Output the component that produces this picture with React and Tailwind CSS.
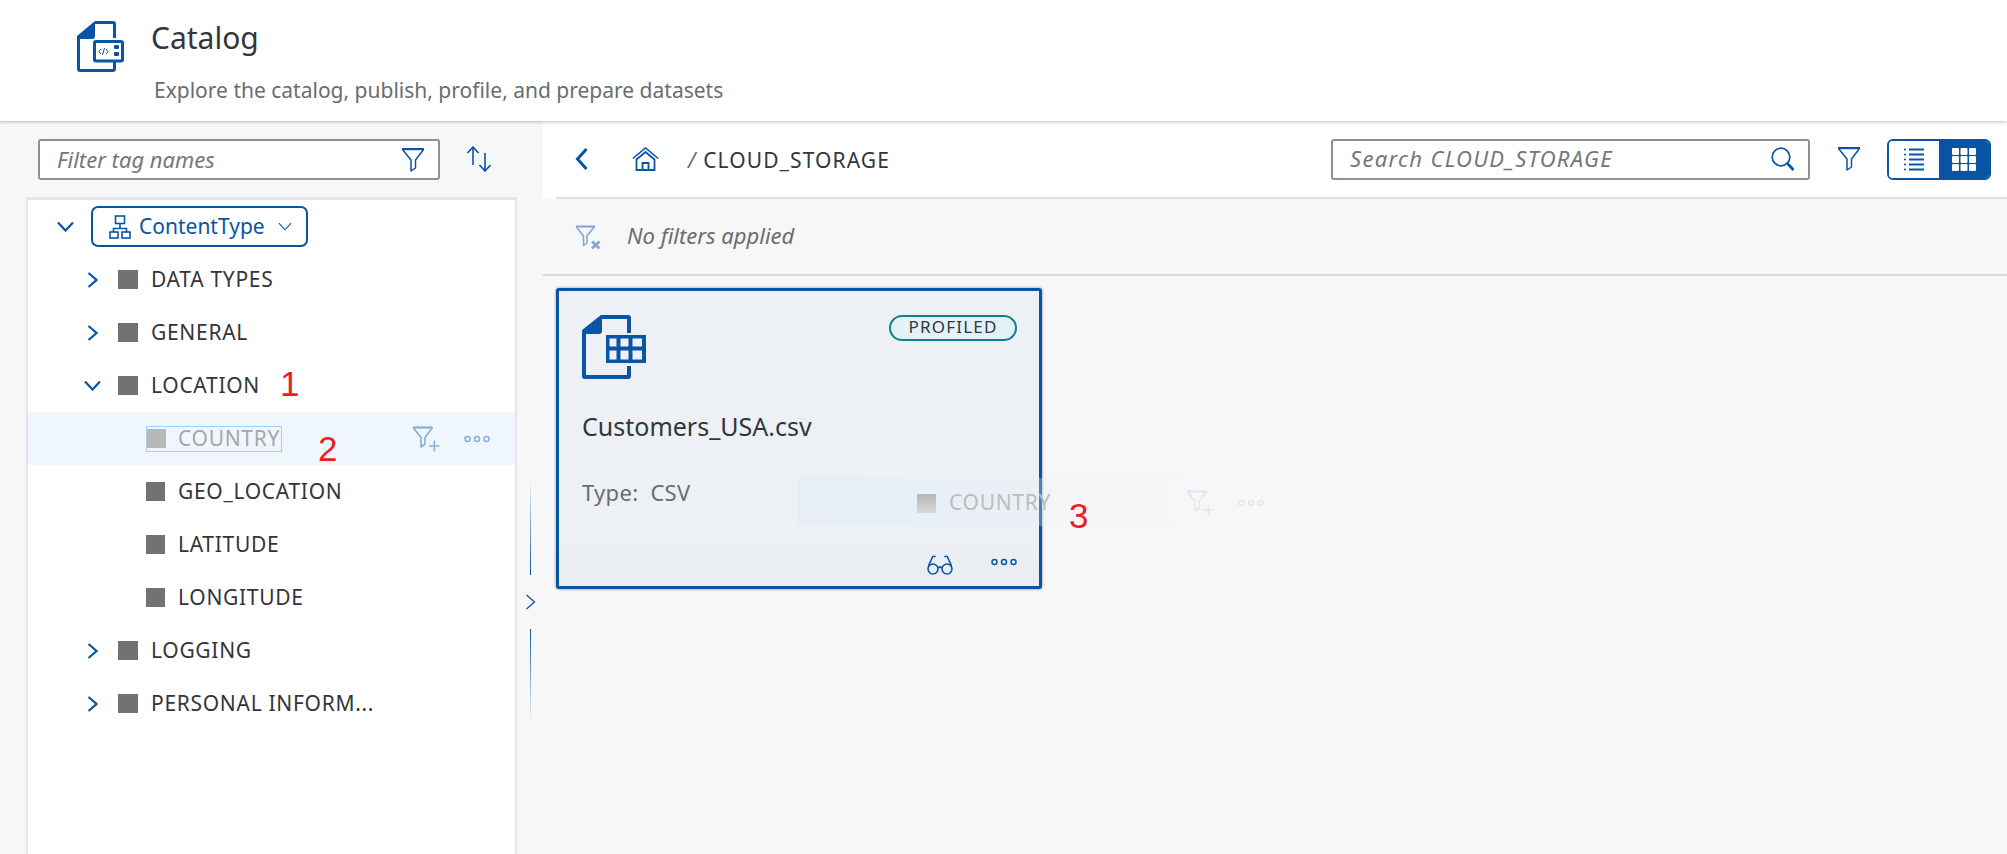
const BLUE = "#0a54a5";

function ChevronRightIcon({ className = "", strokeWidth = 2.2 }) {
  return (
    <svg viewBox="0 0 11 16" className={className} fill="none" stroke="currentColor" strokeWidth={strokeWidth}>
      <path d="M1.500 1l8 7-8 7" />
    </svg>
  );
}

function ChevronDownIcon({ className = "", strokeWidth = 2.2 }) {
  return (
    <svg viewBox="0 0 17 11" className={className} fill="none" stroke="currentColor" strokeWidth={strokeWidth}>
      <path d="M1 1.500l7.500 8 7.500-8" />
    </svg>
  );
}

function ChevronLeftIcon({ className = "" }) {
  return (
    <svg viewBox="0 0 13 22" className={className} fill="none" stroke="currentColor" strokeWidth="3">
      <path d="M11.500 1L2.500 11l9 10" />
    </svg>
  );
}

function FilterIcon({ className = "" }) {
  return (
    <svg viewBox="0 0 24 24" className={className} fill="none" stroke="currentColor" strokeWidth="1.500">
      <path d="M1 1h22" strokeWidth="2.400" />
      <path d="M1.500 1.500L10 12v11l4.500-3v-8L22.500 1.500" strokeLinejoin="round" />
    </svg>
  );
}

function FilterPlusIcon({ className = "" }) {
  return (
    <svg viewBox="0 0 28 26" className={className} fill="none" stroke="currentColor" strokeWidth="1.600">
      <path d="M1 1.500h19.500" strokeWidth="2.200" />
      <path d="M1 1.500l8 10v9.500l4-3v-6.500l7.500-10" strokeLinejoin="round" />
      <path d="M17 20h10.500M22.300 14.500v11" />
    </svg>
  );
}

function FilterCrossIcon({ className = "" }) {
  return (
    <svg viewBox="0 0 26 24" className={className} fill="none" stroke="currentColor" strokeWidth="1.500">
      <path d="M1 1.500h19" strokeWidth="2" />
      <path d="M1 1.500l7.500 9.500v9.500l3.500-2.500v-7l7.500-9.500" strokeLinejoin="round" />
      <path d="M17 16.500l7.500 7M24.500 16.500l-7.500 7" strokeWidth="2.600" />
    </svg>
  );
}

function Dots({ className = "" }) {
  return (
    <svg viewBox="0 0 26 8" className={className} fill="none" stroke="currentColor" strokeWidth="1.500">
      <circle cx="3.500" cy="4" r="2.500" />
      <circle cx="13" cy="4" r="2.500" />
      <circle cx="22.500" cy="4" r="2.500" />
    </svg>
  );
}

function SearchIcon({ className = "" }) {
  return (
    <svg viewBox="0 0 24 24" className={className} fill="none" stroke="currentColor" strokeWidth="1.700">
      <circle cx="10" cy="10" r="8.800" />
      <path d="M16.500 16.500l6 6.500" strokeWidth="2.600" />
    </svg>
  );
}

function HomeIcon({ className = "" }) {
  return (
    <svg viewBox="0 0 27 24" className={className} fill="none" stroke="currentColor" strokeWidth="1.600">
      <path d="M.8 11.500L13.500 1l12.700 10.500" />
      <path d="M4.500 12.500L13.500 5l9 7.500V23h-18z" strokeWidth="1.800" />
      <path d="M10.500 23v-7h6v7" strokeWidth="1.800" />
    </svg>
  );
}

function SortIcon({ className = "" }) {
  return (
    <svg viewBox="0 0 28 26" className={className} fill="none" stroke="currentColor" strokeWidth="1.600">
      <path d="M8 1v18M2.500 7L8 1l5.500 6" />
      <path d="M20 7v18M14.500 19l5.500 6 5.500-6" />
    </svg>
  );
}

function HierarchyIcon({ className = "" }) {
  return (
    <svg viewBox="0 0 22 24" className={className} fill="none" stroke="currentColor" strokeWidth="1.600">
      <rect x="6.500" y="1" width="9" height="7.500" />
      <path d="M11 8.500v5M4.500 17v-3.500h13V17" />
      <rect x="1" y="17" width="8" height="6" />
      <rect x="13" y="17" width="8" height="6" />
    </svg>
  );
}

function GlassesIcon({ className = "" }) {
  return (
    <svg viewBox="0 0 26 20" className={className} fill="none" stroke="currentColor" strokeWidth="1.600">
      <circle cx="6" cy="14" r="5" />
      <circle cx="20" cy="14" r="5" />
      <path d="M11 13c1-1.200 3-1.200 4 0M1.500 11L5.500 2c.5-1 2-1 3 0M24.500 11L20.500 2c-.5-1-2-1-3 0" />
    </svg>
  );
}

function CatalogIcon({ className = "" }) {
  return (
    <svg viewBox="0 0 48 51" className={className} fill="none">
      <path d="M18 0h18a3 3 0 0 1 3 3v14h-3V3H18v12a3 3 0 0 1-3 3H3v30h33v-9h3v9a3 3 0 0 1-3 3H3a3 3 0 0 1-3-3V15z" fill={BLUE} />
      <rect x="17.500" y="20.500" width="28" height="19.500" rx="1.500" fill="white" stroke={BLUE} strokeWidth="3" />
      <path d="M24 28l-2 2.500 2 2.500M29 28l2 2.500-2 2.500M27.500 27l-2 7" stroke={BLUE} strokeWidth="1" />
      <rect x="37" y="24" width="5" height="4" rx="1" fill={BLUE} />
      <rect x="37" y="31" width="5" height="4" rx="1" fill={BLUE} />
    </svg>
  );
}

function TableFileIcon({ className = "" }) {
  return (
    <svg viewBox="0 0 64 64" className={className} fill="none">
      <path d="M19 0h27a3 3 0 0 1 3 3v15h-4V4H20v12a3 3 0 0 1-3 3H4v41h41v-9h4v10a3 3 0 0 1-3 3H3a3 3 0 0 1-3-3V15z" fill={BLUE} />
      <path fillRule="evenodd" d="M24 20h40v28H24zM27.500 23.500v8h7v-8zm11 0v8h8v-8zm12 0v8h9.500v-8zM27.500 35.500v9h7v-9zm11 0v9h8v-9zm12 0v9h9.500v-9z" fill={BLUE} />
    </svg>
  );
}

function ListIcon({ className = "" }) {
  return (
    <svg viewBox="0 0 20 23" className={className} fill="none" stroke="currentColor">
      <path d="M5 1.500h15M5 6.500h15M5 11.500h15M5 16.500h15M5 21.500h15" strokeWidth="2" />
      <path d="M0 1.500h2M0 6.500h2M0 11.500h2M0 16.500h2M0 21.500h2" strokeWidth="1.500" />
    </svg>
  );
}

function GridIcon({ className = "" }) {
  return (
    <svg viewBox="0 0 24 23" className={className} fill="currentColor">
      {[0, 8, 16].map((y) =>
        [0, 8.500, 17].map((x) => <rect key={`${x}-${y}`} x={x} y={y} width="7" height="7" rx="1" />)
      )}
    </svg>
  );
}

function TreeRow({ label, open }) {
  return (
    <div className="h-[53px] flex items-center">
      <span className="w-[90px] pl-[56px] flex">
        <span className="w-[17px] flex justify-center text-[#0a54a5]">
          {open ? <ChevronDownIcon className="w-[17px] h-[11px]" /> : <ChevronRightIcon className="w-[11px] h-[16px]" />}
        </span>
      </span>
      <span className="w-[20px] h-[19px] shrink-0 bg-[#727272]" />
      <span className="ml-[13px] text-[21px] tracking-[0.7px] text-[#32363a]">{label}</span>
    </div>
  );
}

function ChildRow({ label }) {
  return (
    <div className="h-[53px] flex items-center pl-[118px]">
      <span className="w-[19px] h-[19px] shrink-0 bg-[#727272]" />
      <span className="ml-[13px] text-[21px] tracking-[0.7px] text-[#32363a]">{label}</span>
    </div>
  );
}

export default function App() {
  return (
    <div className="relative h-[854px] w-[2007px] overflow-hidden bg-[#f7f7f7] font-['Noto_Sans',sans-serif] text-[#32363a]">
      {/* Header */}
      <header className="relative z-10 h-[121px] bg-white shadow-[0_1px_3px_rgba(0,0,0,0.25)] pl-[77px] pt-[21px] flex">
        <CatalogIcon className="w-[48px] h-[51px]" />
        <div className="ml-[26px] -mt-[3px]">
          <h1 className="text-[30px] leading-[40px] text-[#32363a]">Catalog</h1>
          <p className="mt-[18px] ml-[3px] text-[21px] leading-[28px] text-[#6a6d70]">Explore the catalog, publish, profile, and prepare datasets</p>
        </div>
      </header>

      <main className="flex h-[733px]">
        {/* Left panel */}
        <aside className="w-[543px] shrink-0 flex">
          <div className="w-[517px] shrink-0 flex flex-col">
            <div className="h-[76px] pl-[38px] pt-[18px] flex items-start">
              <div className="w-[402px] h-[41px] bg-white border-2 border-[#89919a] rounded-[3px] flex items-center pl-[17px] pr-[13px]">
                <span className="flex-1 italic text-[22px] leading-[28px] pb-[2px] text-[#74777a]">Filter tag names</span>
                <FilterIcon className="w-[24px] h-[24px] text-[#0a54a5]" />
              </div>
              <SortIcon className="ml-[25px] mt-[7px] w-[28px] h-[26px] text-[#0a54a5]" />
            </div>
            <div className="ml-[26px] flex-1 bg-white border-x-2 border-t-[3px] border-[#e5e5e5]">
              <div className="h-[53px] flex items-center pl-[29px]">
                <ChevronDownIcon className="w-[17px] h-[11px] text-[#0a54a5]" />
                <div className="ml-[17px] w-[217px] h-[41px] border-2 border-[#0a54a5] rounded-[7px] flex items-center pl-[16px] text-[#0a54a5]">
                  <HierarchyIcon className="w-[22px] h-[24px]" />
                  <span className="ml-[8px] text-[21px]">ContentType</span>
                  <ChevronDownIcon strokeWidth={1.300} className="ml-[13px] w-[14px] h-[9px]" />
                </div>
              </div>
              <TreeRow label="DATA TYPES" />
              <TreeRow label="GENERAL" />
              <TreeRow label="LOCATION" open />
              <div className="h-[53px] bg-[#f0f6fe] flex items-center pl-[118px]">
                <div className="h-[26px] w-[136px] border border-[#a9cdf5] flex items-center">
                  <span className="w-[19px] h-[19px] shrink-0 bg-[#b8b8b8]" />
                  <span className="ml-[12px] text-[21px] tracking-[0.7px] text-[#a5a7a9] whitespace-nowrap">COUNTRY</span>
                </div>
                <FilterPlusIcon className="ml-[130px] w-[28px] h-[26px] text-[#89aed8]" />
                <Dots className="ml-[24px] w-[26px] h-[8px] text-[#89aed8]" />
              </div>
              <ChildRow label="GEO_LOCATION" />
              <ChildRow label="LATITUDE" />
              <ChildRow label="LONGITUDE" />
              <TreeRow label="LOGGING" />
              <TreeRow label="PERSONAL INFORM..." />
            </div>
          </div>
          {/* Splitter */}
          <div className="w-[26px] flex flex-col items-center pt-[359px]">
            <div className="w-[1px] h-[95px] bg-gradient-to-b from-transparent to-[#0a54a5]" />
            <ChevronRightIcon strokeWidth={1.300} className="my-[17px] w-[11px] h-[20px] text-[#0a54a5]" />
            <div className="w-[1px] h-[94px] bg-gradient-to-b from-[#0a54a5] to-transparent" />
          </div>
        </aside>

        {/* Right panel */}
        <section className="flex-1 flex flex-col">
          <div className="bg-white">
            <div className="h-[76px] flex items-center pl-[32px] pr-[16px]">
              <ChevronLeftIcon className="w-[13px] h-[22px] text-[#0a54a5]" />
              <HomeIcon className="ml-[44px] w-[27px] h-[24px] text-[#0a54a5]" />
              <span className="ml-[29px] mt-[4px] text-[21px] tracking-[1.100px] text-[#32363a]"><span className="italic text-[#6a6d70]">/</span> CLOUD_STORAGE</span>
              <div className="ml-auto w-[479px] h-[41px] bg-white border-2 border-[#89919a] rounded-[3px] flex items-center pl-[17px] pr-[13px]">
                <span className="flex-1 italic text-[22px] leading-[28px] pb-[2px] tracking-[1.300px] text-[#74777a]">Search CLOUD_STORAGE</span>
                <SearchIcon className="w-[24px] h-[24px] text-[#0a54a5]" />
              </div>
              <FilterIcon className="ml-[27px] w-[24px] h-[24px] text-[#0a54a5]" />
              <div className="ml-[26px] h-[41px] w-[104px] flex rounded-[6px] overflow-hidden border-2 border-[#0a54a5]">
                <span className="w-[50px] bg-white flex items-center justify-center text-[#0a54a5]">
                  <ListIcon className="w-[20px] h-[23px]" />
                </span>
                <span className="flex-1 bg-[#0a54a5] flex items-center justify-center text-white">
                  <GridIcon className="w-[24px] h-[23px]" />
                </span>
              </div>
            </div>
            <div className="ml-[13px] h-[2px] bg-[#e0e0e0]" />
          </div>
          <div className="h-[77px] border-b-2 border-[#d9d9d9] flex items-center pl-[32px]">
            <FilterCrossIcon className="w-[26px] h-[24px] text-[#7fa6d3]" />
            <span className="ml-[26px] pb-[2px] italic text-[22px] text-[#6a6d70]">No filters applied</span>
          </div>
          <div className="pl-[13px] pt-[12px]">
            <article className="w-[486px] h-[301px] border-[3px] border-[#0a54a5] rounded-[3px] bg-[#edf0f5] shadow-[0_0_3px_rgba(0,0,0,0.45)] flex flex-col">
              <div className="flex-1 pl-[23px] pr-[22px] pt-[24px]">
                <div className="flex items-start justify-between">
                  <TableFileIcon className="w-[64px] h-[64px]" />
                  <span className="h-[26px] w-[128px] rounded-full border-2 border-[#12818f] bg-[#e2f2f8] flex items-center justify-center pb-[2px] text-[17px] tracking-[1.200px] text-[#32363a]">PROFILED</span>
                </div>
                <div className="mt-[31px] text-[25px] leading-[32px] text-[#32363a]">Customers_USA.csv</div>
                <div className="mt-[36px] text-[22px] leading-[28px] tracking-[0.3px] text-[#6a6d70]">Type:&nbsp; CSV</div>
              </div>
              <div className="h-[51px] bg-gradient-to-b from-[#edf0f5] to-[#e9ecf1] flex items-start justify-end gap-[38px] pr-[22px] pt-[20px] text-[#0a54a5]">
                <GlassesIcon className="w-[26px] h-[20px]" />
                <Dots className="w-[26px] h-[8px] mt-[3px]" />
              </div>
            </article>
          </div>
        </section>
      </main>

      {/* Drag ghost */}
      <div className="absolute left-[798px] top-[478px] w-[472px] h-[48px] z-20 flex items-center pl-[119px] pt-[2px] bg-gradient-to-r from-[#dbeafa]/40 via-[#e8f0f8]/30 to-transparent">
        <span className="w-[19px] h-[19px] bg-gradient-to-b from-[#b4b6b8] to-[#d8d9da]" />
        <span className="ml-[13px] text-[21px] tracking-[0.7px] text-[#bbbdbf]">COUNTRY</span>
        <FilterPlusIcon className="ml-[135px] w-[28px] h-[26px] text-[#e3e7ec]" />
        <Dots className="ml-[24px] w-[26px] h-[8px] text-[#e3e7ec]" />
      </div>

      {/* Annotations */}
      <span className="absolute left-[280px] top-[364px] z-30 text-[35px] leading-[40px] text-[#ee1c25] font-['Liberation_Sans',sans-serif]">1</span>
      <span className="absolute left-[318px] top-[429px] z-30 text-[35px] leading-[40px] text-[#ee1c25] font-['Liberation_Sans',sans-serif]">2</span>
      <span className="absolute left-[1069px] top-[496px] z-30 text-[35px] leading-[40px] text-[#ee1c25] font-['Liberation_Sans',sans-serif]">3</span>
    </div>
  );
}
